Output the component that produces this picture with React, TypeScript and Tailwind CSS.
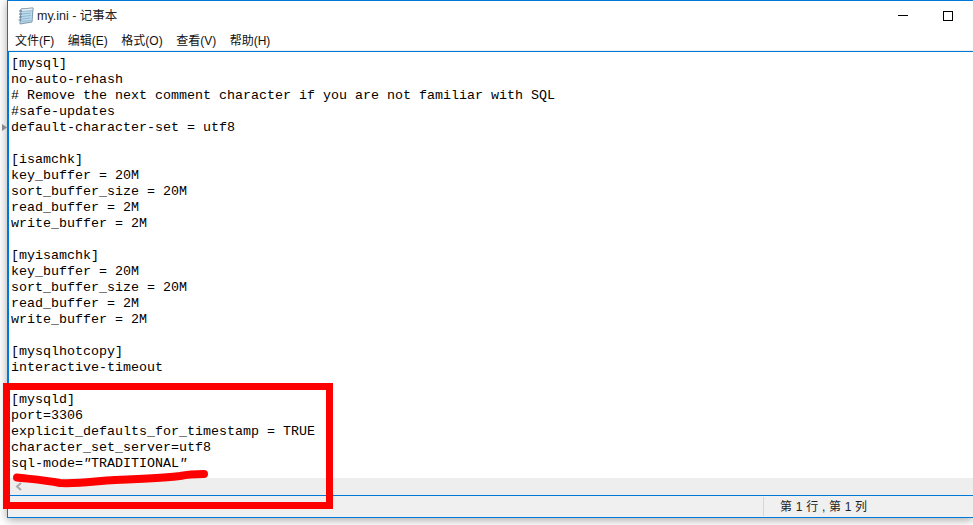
const lines = [
  '[mysql]',
  'no-auto-rehash',
  '# Remove the next comment character if you are not familiar with SQL',
  '#safe-updates',
  'default-character-set = utf8',
  '',
  '[isamchk]',
  'key_buffer = 20M',
  'sort_buffer_size = 20M',
  'read_buffer = 2M',
  'write_buffer = 2M',
  '',
  '[myisamchk]',
  'key_buffer = 20M',
  'sort_buffer_size = 20M',
  'read_buffer = 2M',
  'write_buffer = 2M',
  '',
  '[mysqlhotcopy]',
  'interactive-timeout',
  '',
  '[mysqld]',
  'port=3306',
  'explicit_defaults_for_timestamp = TRUE',
  'character_set_server=utf8',
];

const menus = ['文件(F)', '编辑(E)', '格式(O)', '查看(V)', '帮助(H)'];

function NotepadIcon() {
  return (
    <svg width="17" height="18" viewBox="0 0 17 18" className="shrink-0">
      <path d="M4 2 L16 1 L15 15 L3 17 Z" fill="#bcdcf0" stroke="#7d97aa" strokeWidth="1" />
      <path d="M4 2 L16 1 L15.8 3.5 L3.8 4.5 Z" fill="#e8f3fa" stroke="#7d97aa" strokeWidth="0.6" />
      <path d="M5 7 L14 6 M5 9.5 L14 8.5 M4.7 12 L13.7 11 M4.6 14.5 L13.5 13.5" stroke="#8fb5cf" strokeWidth="1" />
      <path d="M2 4 L5 4 M2 7 L5 7 M2 10 L5 10 M1.6 13 L4.6 13" stroke="#5f7383" strokeWidth="1" />
    </svg>
  );
}

export default function App() {
  return (
    <div className="relative h-[525px] w-[973px] overflow-hidden bg-white font-['Liberation_Sans','Noto_Sans_CJK_SC',sans-serif]">
      <div className="ml-[7px] flex h-[518px] w-[966px] flex-col border-t border-b border-l border-[#0078d7] bg-white shadow-[0_2px_9px_rgba(0,0,0,0.35)]">
        {/* title bar */}
        <div className="flex h-[30px] shrink-0 items-center pl-[9px]">
          <NotepadIcon />
          <span className="ml-[3px] text-[12.5px] text-[#222]">my.ini - 记事本</span>
          <div className="-mt-px ml-auto flex items-center">
            <div className="h-px w-[10px] bg-black" />
            <div className="ml-[35px] mr-[20px] h-[10px] w-[10px] border border-black" />
          </div>
        </div>
        {/* menu bar */}
        <div className="flex h-[20px] shrink-0 items-center gap-[13.5px] border-b border-[#eeeeee] pl-[7px] text-[12px] text-[#111]">
          {menus.map((m) => (
            <span key={m}>{m}</span>
          ))}
        </div>
        {/* editor */}
        <div className="min-h-0 flex-1 border-t border-l border-[#0078d7] pl-[2px] pt-[4px] font-['Liberation_Mono','Noto_Sans_CJK_SC',monospace] text-[13.33px] leading-[16px] text-black">
          {lines.map((line, i) => (
            <div key={i} className="h-[16px] whitespace-pre">
              {line}
            </div>
          ))}
          <div className="h-[16px] whitespace-pre">
            sql-mode=<span className="italic">"</span>TRADITIONAL<span className="italic">"</span>
          </div>
        </div>
        {/* horizontal scrollbar */}
        <div className="flex h-[17px] shrink-0 items-center bg-[#eeeeee] pl-[7px]">
          <svg width="7" height="9" viewBox="0 0 7 9">
            <path d="M6 1 L2 4.5 L6 8" fill="none" stroke="#a8a8a8" strokeWidth="2" />
          </svg>
        </div>
        {/* status bar */}
        <div className="flex h-[22px] shrink-0 items-center border-t border-[#0078d7] bg-[#f0f0f0] text-[12px] text-[#222]">
          <div className="ml-[755px] h-[19px] w-px bg-[#d7d7d7]" />
          <span className="ml-[16px] tracking-[0.2px]">第 1 行 , 第 1 列</span>
        </div>
      </div>

      {/* splitter arrow left of the window */}
      <svg className="absolute left-[2px] top-[124px]" width="5" height="7" viewBox="0 0 5 7">
        <path d="M0 0 L5 3.5 L0 7 Z" fill="#8a8a8a" />
      </svg>

      {/* hand drawn annotation */}
      <div className="absolute left-[3px] top-[383px] h-[126px] w-[330px] border-[7px] border-[#ff0000]" />
      <svg className="absolute left-0 top-[465px]" width="220" height="25" viewBox="0 0 220 25">
        <path
          d="M17 12.5 C30 14 45 15 60 18 C80 19 95 16 115 15 C140 14 165 13 180 11 C190 9 198 9 204 9"
          fill="none"
          stroke="#ff0000"
          strokeWidth="8"
          strokeLinecap="round"
        />
      </svg>
    </div>
  );
}
